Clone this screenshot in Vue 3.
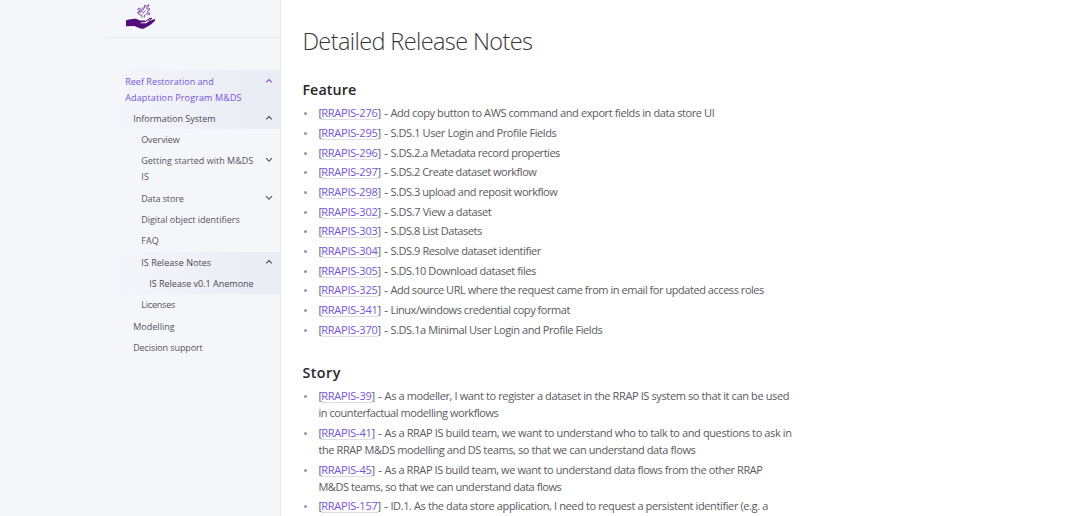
<script setup>
// Tracks a single line of text so that it spans the given width.
const vFit = (el, { value }) => {
  el.style.letterSpacing = '0px'
  const natural = el.getBoundingClientRect().width
  el.style.letterSpacing = (value - natural) / el.textContent.length + 'px'
}

const nav = [
  { lines: [['Reef Restoration and', 88.5], ['Adaptation Program M&DS', 116.5]], level: 0, icon: 'up', cls: 'root shade' },
  { lines: [['Information System', 82.5]], level: 1, icon: 'up', cls: 'shade active' },
  { lines: [['Overview', 38.5]], level: 2 },
  { lines: [['Getting started with M&DS', 112], ['IS', 8]], level: 2, icon: 'down' },
  { lines: [['Data store', 42.5]], level: 2, icon: 'down' },
  { lines: [['Digital object identifiers', 98.5]], level: 2 },
  { lines: [['FAQ', 17.5]], level: 2 },
  { lines: [['IS Release Notes', 70]], level: 2, icon: 'up', cls: 'shade active' },
  { lines: [['IS Release v0.1 Anemone', 104.5]], level: 3, cls: 'shade active' },
  { lines: [['Licenses', 34]], level: 2 },
  { lines: [['Modelling', 41.5]], level: 1 },
  { lines: [['Decision support', 69.5]], level: 1 },
]

const sections = [
  {
    title: 'Feature',
    width: 54,
    items: [
      [276, [['Add copy button to AWS command and export fields in data store UI', 324]]],
      [295, [['S.DS.1 User Login and Profile Fields', 166]]],
      [296, [['S.DS.2.a Metadata record properties', 169.5]]],
      [297, [['S.DS.2 Create dataset workflow', 146]]],
      [298, [['S.DS.3 upload and reposit workflow', 167]]],
      [302, [['S.DS.7 View a dataset', 101]]],
      [303, [['S.DS.8 List Datasets', 91.5]]],
      [304, [['S.DS.9 Resolve dataset identifier', 150.5]]],
      [305, [['S.DS.10 Download dataset files', 145.5]]],
      [325, [['Add source URL where the request came from in email for updated access roles', 373.5]]],
      [341, [['Linux/windows credential copy format', 179.5]]],
      [370, [['S.DS.1a Minimal User Login and Profile Fields', 212]]],
    ],
  },
  {
    title: 'Story',
    width: 38.5,
    items: [
      [39, [['As a modeller, I want to register a dataset in the RRAP IS system so that it can be used', 404.5], ['in counterfactual modelling workflows', 180]]],
      [41, [['As a RRAP IS build team, we want to understand who to talk to and questions to ask in', 407], ['the RRAP M&DS modelling and DS teams, so that we can understand data flows', 377]]],
      [45, [['As a RRAP IS build team, we want to understand data flows from the other RRAP', 378], ['M&DS teams, so that we can understand data flows', 243]]],
      [157, [['ID.1. As the data store application, I need to request a persistent identifier (e.g. a', 377.5]]],
    ],
  },
]
</script>

<template>
  <div class="page">
    <aside>
      <header>
        <svg class="logo" width="30" height="27" viewBox="0 0 30 27">
          <path fill="#530c7d" d="M0 16.2Q5 14.3 10 14.7L14 16.5H18Q20.5 16.7 20 18L15 18.5 14 19.2H20L24 16.8 28 15.3Q29.9 15 29 16.8L25 20.5 18.5 24.2Q16.5 25.4 13 24L8.5 22.1 0 22.2Z" />
          <path fill="none" stroke="#530c7d" stroke-width="1" d="M19.8 17.1 23 14.8 26 14.2M22 17.2 25.2 14.9" />
          <g fill="none" stroke="#7b45a0" stroke-width=".9" stroke-linejoin="round">
            <path d="M16 13.7V11.4L12.7 10.4 11.5 8.5 13.1 8.9 12.8 7 14.2 8.6 14.4 6.7 11.7 5.4 12.8 4.1 14.9 5 15.8 7.5 17.3 6.2 16.6 3.8 18.3 4.2 18.7 1.1 20 2.4 22.9 .9 22.4 2.7 20.4 3.7 21.2 5.2 23.7 4.6 23.2 6.4 21.6 7.2 21.4 8.6 24 9.3 23.3 10.7 20.9 9.8 18.3 11.6V13.7M16.1 9.3 18.2 8.2 19.3 6.5" />
          </g>
        </svg>
      </header>
      <nav>
        <a v-for="(n, i) in nav" :key="i" :class="['link', 'level' + n.level, n.cls]">
          <span class="label">
            <span v-for="l in n.lines" :key="l[0]" class="row"><span v-fit="l[1]">{{ l[0] }}</span></span>
          </span>
          <svg v-if="n.icon" class="chevron" width="8" height="6" viewBox="0 0 8 6">
            <path :d="n.icon === 'up' ? 'M1.2 4.4 4 1.6 6.8 4.4' : 'M1 1.2 4 4.2 7 1.2'" />
          </svg>
        </a>
      </nav>
    </aside>
    <main>
      <h1><span v-fit="230">Detailed Release Notes</span></h1>
      <section v-for="s in sections" :key="s.title">
        <h2><span v-fit="s.width">{{ s.title }}</span></h2>
        <ul>
          <li v-for="[id, lines] in s.items" :key="id">
            <div v-for="(l, i) in lines" :key="i" class="row">
              <span v-if="i === 0" :class="['ref', { short: id < 100 }]"><span class="open">[</span><a v-fit="id < 100 ? 50.3 : 56.3">RRAPIS-{{ id }}</a><span>]</span><span class="dash">-</span></span><span v-fit="l[1]">{{ l[0] }}</span>
            </div>
          </li>
        </ul>
      </section>
    </main>
  </div>
</template>

<style>
body { background: #fff; overflow: hidden; }
</style>

<style scoped>
.page {
  display: flex;
  height: 516px;
  overflow: hidden;
  font-family: "Open Sans", "Noto Sans", sans-serif;
  color: #5c5962;
}
aside {
  box-sizing: border-box;
  flex: 0 0 281px;
  padding-left: 105px;
  background: #f5f6fa;
  border-right: 1px solid #e9e8ee;
}
header {
  box-sizing: border-box;
  height: 38px;
  padding: 4px 0 0 21px;
  border-bottom: 1px solid #e9e9ef;
}
.logo { display: block; }
nav { padding-top: 32px; }
.link {
  display: flex;
  box-sizing: border-box;
  justify-content: space-between;
  min-height: 21.34px;
  padding: 3.2px 7px 2.1px 20.2px;
  font-size: 9px;
  line-height: 16px;
  color: #56535d;
}
.root { height: 37.6px; padding-top: 4px; color: #7253ed; font-weight: 500; }
.level1 { padding-left: 28.2px; }
.level2 { padding-left: 36.2px; }
.level3 { padding-left: 44.2px; }
.shade { background: linear-gradient(90deg, #f5f6fa 5%, #ebedf5 80%); }
.active { color: #4a4852; font-weight: 500; }
.row { display: block; white-space: nowrap; }
.chevron { margin-top: 4px; fill: none; stroke: currentColor; stroke-width: 1.1; }
.root .chevron { margin-top: 3.5px; }
main { padding: 25px 0 0 21.4px; }
h1, h2 { margin: 0; white-space: nowrap; color: #27262b; }
h1 { height: 52px; font-size: 23.5px; line-height: 33px; font-weight: 300; color: #38363d; }
h2 { height: 27.15px; font-size: 14.3px; line-height: 25px; font-weight: 600; }
section { height: 283.2px; }
ul { margin: 0; padding: 0 0 0 16px; list-style: none; }
li { position: relative; margin-bottom: 2.7px; font-size: 11px; line-height: 17px; }
li::before {
  content: "";
  position: absolute;
  left: -14.5px;
  top: 8px;
  width: 3px;
  height: 3px;
  border-radius: 50%;
  background: #99969f;
}
.ref { display: inline-block; width: 72px; }
.ref.short { width: 66.2px; }
.open { margin-right: -.8px; }
.ref a { display: inline-block; height: 13px; line-height: 13px; color: #7253ed; border-bottom: 1px solid #dedde5; }
.dash { display: inline-block; margin-left: 2.8px; transform: scaleX(1.2); transform-origin: left; }
.short .dash { margin-left: 2.4px; }
</style>
